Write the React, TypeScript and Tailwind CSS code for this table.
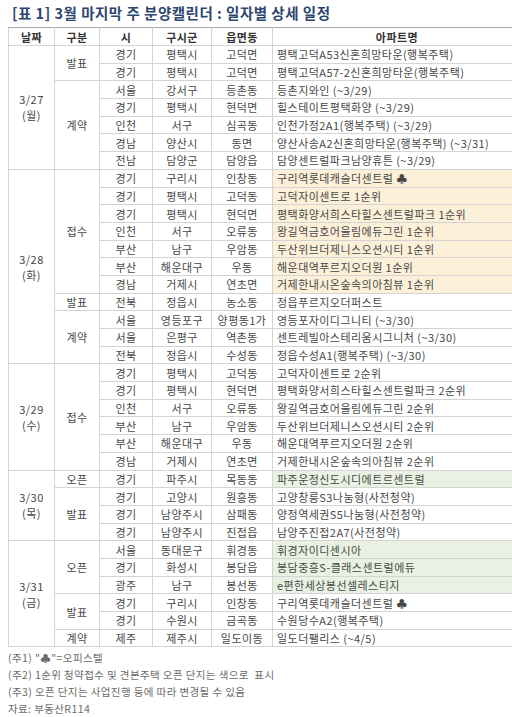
import React from 'react';

type Row = {
  date?: { day: string; week: string; span: number };
  kind?: { label: string; span: number };
  si: string;
  gu: string;
  dong: string;
  apt: string;
  tone?: 'orange' | 'green';
};

const rows: Row[] = [
  { date: { day: '3/27', week: '(월)', span: 7 }, kind: { label: '발표', span: 2 }, si: '경기', gu: '평택시', dong: '고덕면', apt: '평택고덕A53신혼희망타운(행복주택)' },
  { si: '경기', gu: '평택시', dong: '고덕면', apt: '평택고덕A57-2신혼희망타운(행복주택)' },
  { kind: { label: '계약', span: 5 }, si: '서울', gu: '강서구', dong: '등촌동', apt: '등촌지와인 (~3/29)' },
  { si: '경기', gu: '평택시', dong: '현덕면', apt: '힐스테이트평택화양 (~3/29)' },
  { si: '인천', gu: '서구', dong: '심곡동', apt: '인천가정2A1(행복주택) (~3/29)' },
  { si: '경남', gu: '양산시', dong: '동면', apt: '양산사송A2신혼희망타운(행복주택) (~3/31)' },
  { si: '전남', gu: '담양군', dong: '담양읍', apt: '담양센트럴파크남양휴튼 (~3/29)' },

  { date: { day: '3/28', week: '(화)', span: 11 }, kind: { label: '접수', span: 7 }, si: '경기', gu: '구리시', dong: '인창동', apt: '구리역롯데캐슬더센트럴 ♣', tone: 'orange' },
  { si: '경기', gu: '평택시', dong: '고덕동', apt: '고덕자이센트로 1순위', tone: 'orange' },
  { si: '경기', gu: '평택시', dong: '현덕면', apt: '평택화양서희스타힐스센트럴파크 1순위', tone: 'orange' },
  { si: '인천', gu: '서구', dong: '오류동', apt: '왕길역금호어울림에듀그린 1순위', tone: 'orange' },
  { si: '부산', gu: '남구', dong: '우암동', apt: '두산위브더제니스오션시티 1순위', tone: 'orange' },
  { si: '부산', gu: '해운대구', dong: '우동', apt: '해운대역푸르지오더원 1순위', tone: 'orange' },
  { si: '경남', gu: '거제시', dong: '연초면', apt: '거제한내시온숲속의아침뷰 1순위', tone: 'orange' },
  { kind: { label: '발표', span: 1 }, si: '전북', gu: '정읍시', dong: '농소동', apt: '정읍푸르지오더퍼스트' },
  { kind: { label: '계약', span: 3 }, si: '서울', gu: '영등포구', dong: '양평동1가', apt: '영등포자이디그니티 (~3/30)' },
  { si: '서울', gu: '은평구', dong: '역촌동', apt: '센트레빌아스테리움시그니처 (~3/30)' },
  { si: '전북', gu: '정읍시', dong: '수성동', apt: '정읍수성A1(행복주택) (~3/30)' },

  { date: { day: '3/29', week: '(수)', span: 6 }, kind: { label: '접수', span: 6 }, si: '경기', gu: '평택시', dong: '고덕동', apt: '고덕자이센트로 2순위' },
  { si: '경기', gu: '평택시', dong: '현덕면', apt: '평택화양서희스타힐스센트럴파크 2순위' },
  { si: '인천', gu: '서구', dong: '오류동', apt: '왕길역금호어울림에듀그린 2순위' },
  { si: '부산', gu: '남구', dong: '우암동', apt: '두산위브더제니스오션시티 2순위' },
  { si: '부산', gu: '해운대구', dong: '우동', apt: '해운대역푸르지오더원 2순위' },
  { si: '경남', gu: '거제시', dong: '연초면', apt: '거제한내시온숲속의아침뷰 2순위' },

  { date: { day: '3/30', week: '(목)', span: 4 }, kind: { label: '오픈', span: 1 }, si: '경기', gu: '파주시', dong: '목동동', apt: '파주운정신도시디에트르센트럴', tone: 'green' },
  { kind: { label: '발표', span: 3 }, si: '경기', gu: '고양시', dong: '원흥동', apt: '고양창릉S3나눔형(사전청약)' },
  { si: '경기', gu: '남양주시', dong: '삼패동', apt: '양정역세권S5나눔형(사전청약)' },
  { si: '경기', gu: '남양주시', dong: '진접읍', apt: '남양주진접2A7(사전청약)' },

  { date: { day: '3/31', week: '(금)', span: 6 }, kind: { label: '오픈', span: 3 }, si: '서울', gu: '동대문구', dong: '휘경동', apt: '휘경자이디센시아', tone: 'green' },
  { si: '경기', gu: '화성시', dong: '봉담읍', apt: '봉담중흥S-클래스센트럴에듀', tone: 'green' },
  { si: '광주', gu: '남구', dong: '봉선동', apt: 'e편한세상봉선셀레스티지', tone: 'green' },
  { kind: { label: '발표', span: 2 }, si: '경기', gu: '구리시', dong: '인창동', apt: '구리역롯데캐슬더센트럴 ♣' },
  { si: '경기', gu: '수원시', dong: '금곡동', apt: '수원당수A2(행복주택)' },
  { kind: { label: '계약', span: 1 }, si: '제주', gu: '제주시', dong: '일도이동', apt: '일도더팰리스 (~4/5)' },
];

const cell = 'border border-[#d4d4d4] text-center align-middle p-0';

export default function App() {
  return (
    <div className="w-[512px] h-[717px] overflow-hidden bg-white text-[#484848] font-['Malgun_Gothic','Noto_Sans_CJK_KR',sans-serif]">
      <h1 className="pl-[12px] pt-[4px] h-[27px] text-[14.5px] font-bold text-[#2d4670] leading-[17px] tracking-[0.5px]">
        [표 1] 3월 마지막 주 분양캘린더 : 일자별 상세 일정
      </h1>
      <table className="ml-[8px] w-[514px] border-collapse table-fixed text-[11px] leading-[12px] tracking-[0.45px]">
        <colgroup>
          <col className="w-[46px]" />
          <col className="w-[45px]" />
          <col className="w-[53px]" />
          <col className="w-[59px]" />
          <col className="w-[61px]" />
          <col />
        </colgroup>
        <thead>
          <tr className="h-[18px] font-bold text-[#333333]">
            <th className={`${cell} border-t-[#a8a8a8]`}>날짜</th>
            <th className={`${cell} border-t-[#a8a8a8]`}>구분</th>
            <th className={`${cell} border-t-[#a8a8a8]`}>시</th>
            <th className={`${cell} border-t-[#a8a8a8]`}>구시군</th>
            <th className={`${cell} border-t-[#a8a8a8]`}>읍면동</th>
            <th className={`${cell} border-t-[#a8a8a8]`}>아파트명</th>
          </tr>
        </thead>
        <tbody>
          {rows.map((r, i) => (
            <tr key={i} className="h-[17.7px]">
              {r.date && (
                <td rowSpan={r.date.span} className={cell}>
                  <div className="flex flex-col items-center gap-[4px]">
                    <span>{r.date.day}</span>
                    <span>{r.date.week}</span>
                  </div>
                </td>
              )}
              {r.kind && (
                <td rowSpan={r.kind.span} className={cell}>
                  {r.kind.label}
                </td>
              )}
              <td className={cell}>{r.si}</td>
              <td className={cell}>{r.gu}</td>
              <td className={cell}>{r.dong}</td>
              <td
                className={`${cell} text-left pl-[4px] whitespace-nowrap ${
                  r.tone === 'orange' ? 'bg-[#fdf0d9]' : r.tone === 'green' ? 'bg-[#e9f2e2]' : ''
                }`}
              >
                {r.apt}
              </td>
            </tr>
          ))}
        </tbody>
      </table>
      <div className="pl-[8px] pt-[2px] text-[10.5px] leading-[17px] tracking-[0.4px] text-[#6b6b6b]">
        <p>(주1) "♣"=오피스텔</p>
        <p>(주2) 1순위 청약접수 및 견본주택 오픈 단지는 색으로&nbsp; 표시</p>
        <p>(주3) 오픈 단지는 사업진행 등에 따라 변경될 수 있음</p>
        <p>자료: 부동산R114</p>
      </div>
    </div>
  );
}
